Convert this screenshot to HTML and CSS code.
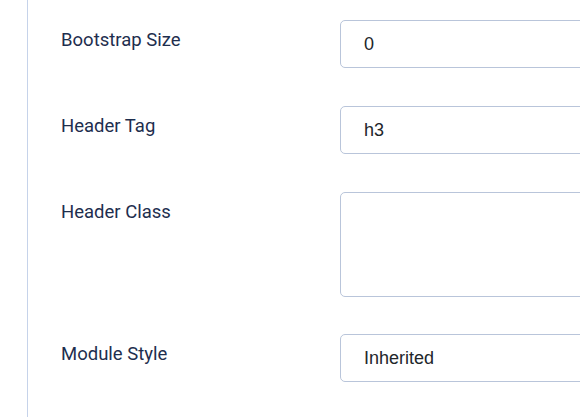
FILE: index.html
```html
<!DOCTYPE html>
<html lang="en">
<head>
<meta charset="utf-8">
<title>Module options</title>
<link rel="stylesheet" href="styles.css">
</head>
<body>
<div class="panel">
  <div class="row">
    <label class="label">Bootstrap Size</label>
    <div class="control">0</div>
  </div>
  <div class="row">
    <label class="label">Header Tag</label>
    <div class="control">h3</div>
  </div>
  <div class="row row-tall">
    <label class="label">Header Class</label>
    <div class="control area"></div>
  </div>
  <div class="row">
    <label class="label">Module Style</label>
    <div class="control">Inherited</div>
  </div>
</div>
</body>
</html>
```

FILE: styles.css
```css
html, body {
  margin: 0;
  padding: 0;
  background: #ffffff;
  overflow: hidden;
}
body {
  width: 580px;
  height: 417px;
}
.panel {
  margin-left: 27px;
  border-left: 1px solid #c6d3ea;
  height: 417px;
  padding: 20px 0 0 33px;
  box-sizing: border-box;
  overflow: hidden;
}
.row {
  display: grid;
  grid-template-columns: 279px 240px;
  margin-bottom: 38px;
}
.row-tall {
  margin-bottom: 37px;
}
.label {
  font-family: Roboto, "Noto Sans", sans-serif;
  font-size: 18.5px;
  line-height: 27px;
  color: #1e2e4e;
  padding-top: 7px;
}
.control {
  box-sizing: border-box;
  width: 260px;
  height: 48px;
  border: 1px solid #b9c5da;
  border-radius: 5px;
  padding: 0 23px;
  display: flex;
  align-items: center;
  font-family: "Liberation Sans", Arial, sans-serif;
  font-size: 18px;
  color: #22262a;
  background: #fff;
}
.control.area {
  height: 105px;
}
```
